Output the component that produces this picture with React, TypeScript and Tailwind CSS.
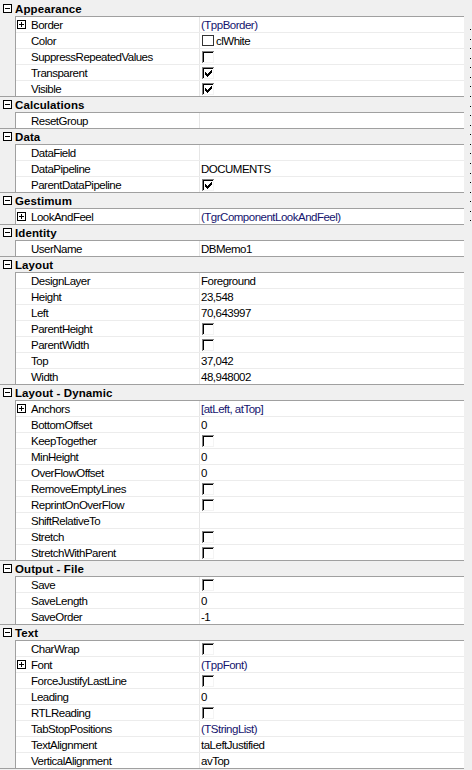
import React from "react";

type Item = {
  n: string;
  v?: string;
  plus?: boolean;
  cb?: boolean;
  color?: boolean;
  obj?: boolean;
};

type Group = { title: string; items: Item[] };

const groups: Group[] = [
  {
    title: "Appearance",
    items: [
      { n: "Border", plus: true, v: "(TppBorder)", obj: true },
      { n: "Color", color: true, v: "clWhite" },
      { n: "SuppressRepeatedValues", cb: false },
      { n: "Transparent", cb: true },
      { n: "Visible", cb: true },
    ],
  },
  { title: "Calculations", items: [{ n: "ResetGroup", v: "" }] },
  {
    title: "Data",
    items: [
      { n: "DataField", v: "" },
      { n: "DataPipeline", v: "DOCUMENTS" },
      { n: "ParentDataPipeline", cb: true },
    ],
  },
  {
    title: "Gestimum",
    items: [{ n: "LookAndFeel", plus: true, v: "(TgrComponentLookAndFeel)", obj: true }],
  },
  { title: "Identity", items: [{ n: "UserName", v: "DBMemo1" }] },
  {
    title: "Layout",
    items: [
      { n: "DesignLayer", v: "Foreground" },
      { n: "Height", v: "23,548" },
      { n: "Left", v: "70,643997" },
      { n: "ParentHeight", cb: false },
      { n: "ParentWidth", cb: false },
      { n: "Top", v: "37,042" },
      { n: "Width", v: "48,948002" },
    ],
  },
  {
    title: "Layout - Dynamic",
    items: [
      { n: "Anchors", plus: true, v: "[atLeft, atTop]", obj: true },
      { n: "BottomOffset", v: "0" },
      { n: "KeepTogether", cb: false },
      { n: "MinHeight", v: "0" },
      { n: "OverFlowOffset", v: "0" },
      { n: "RemoveEmptyLines", cb: false },
      { n: "ReprintOnOverFlow", cb: false },
      { n: "ShiftRelativeTo", v: "" },
      { n: "Stretch", cb: false },
      { n: "StretchWithParent", cb: false },
    ],
  },
  {
    title: "Output - File",
    items: [
      { n: "Save", cb: false },
      { n: "SaveLength", v: "0" },
      { n: "SaveOrder", v: "-1" },
    ],
  },
  {
    title: "Text",
    items: [
      { n: "CharWrap", cb: false },
      { n: "Font", plus: true, v: "(TppFont)", obj: true },
      { n: "ForceJustifyLastLine", cb: false },
      { n: "Leading", v: "0" },
      { n: "RTLReading", cb: false },
      { n: "TabStopPositions", v: "(TStringList)", obj: true },
      { n: "TextAlignment", v: "taLeftJustified" },
      { n: "VerticalAlignment", v: "avTop" },
    ],
  },
];

function BoxSign({ plus }: { plus: boolean }) {
  return (
    <svg width="9" height="9" viewBox="0 0 9 9" className="shrink-0 block" shapeRendering="crispEdges">
      <rect x="0.5" y="0.5" width="8" height="8" fill="#ffffff" stroke="#000000" strokeWidth="1" />
      <rect x="2" y="4" width="5" height="1" fill="#000000" />
      {plus && <rect x="4" y="2" width="1" height="5" fill="#000000" />}
    </svg>
  );
}

function CheckBox({ checked }: { checked: boolean }) {
  return (
    <svg width="12" height="12" viewBox="0 0 12 12" className="shrink-0 block" shapeRendering="crispEdges">
      <rect x="0" y="0" width="12" height="12" fill="#ffffff" />
      <rect x="0" y="0" width="12" height="1" fill="#808080" />
      <rect x="0" y="0" width="1" height="12" fill="#808080" />
      <rect x="1" y="1" width="10" height="1" fill="#000000" />
      <rect x="1" y="1" width="1" height="10" fill="#000000" />
      <rect x="1" y="11" width="11" height="1" fill="#f4f4f4" />
      <rect x="11" y="1" width="1" height="11" fill="#f4f4f4" />
      {checked && (
        <g fill="#000000">
          <rect x="3" y="5" width="1" height="3" />
          <rect x="4" y="6" width="1" height="3" />
          <rect x="5" y="7" width="1" height="3" />
          <rect x="6" y="6" width="1" height="3" />
          <rect x="7" y="5" width="1" height="3" />
          <rect x="8" y="4" width="1" height="3" />
          <rect x="9" y="3" width="1" height="3" />
        </g>
      )}
    </svg>
  );
}

function ColorSwatch() {
  return (
    <span className="block w-[12px] h-[11px] shrink-0 bg-white border border-[#333333]" />
  );
}

function Row({ item, last }: { item: Item; last: boolean }) {
  return (
    <div
      className={
        last
          ? "flex h-[15px] bg-white"
          : "flex h-[16px] bg-white border-b border-[#ececec]"
      }
    >
      <div className="w-[184px] shrink-0 flex items-center pl-px border-r border-[#e6e6e6]">
        <div className="w-[14px] shrink-0 flex items-center">
          {item.plus && <BoxSign plus={true} />}
        </div>
        <span className="whitespace-nowrap tracking-[-0.5px] pt-px">{item.n}</span>
      </div>
      <div className="flex-1 flex items-center pl-px min-w-0 overflow-hidden">
        {item.cb !== undefined ? (
          <span className="ml-px pt-px">
            <CheckBox checked={item.cb} />
          </span>
        ) : item.color ? (
          <span className="flex items-center ml-px gap-[2px]">
            <ColorSwatch />
            <span className="whitespace-nowrap tracking-[-0.5px] pt-px">{item.v}</span>
          </span>
        ) : (
          <span
            className={
              item.obj
                ? "whitespace-nowrap tracking-[-0.5px] pt-px text-[#14146e]"
                : "whitespace-nowrap tracking-[-0.5px] pt-px text-black"
            }
          >
            {item.v}
          </span>
        )}
      </div>
    </div>
  );
}

function GroupBlock({ group }: { group: Group }) {
  return (
    <div className="border-b border-[#a0a0a0]">
      <div className="h-[15px] flex items-center pl-[3px] gap-[3px]">
        <BoxSign plus={false} />
        <span className="font-bold whitespace-nowrap tracking-[0.1px] pt-px text-black">{group.title}</span>
      </div>
      <div className="ml-[15px] border-l border-t border-[#a0a0a0] bg-white">
        {group.items.map((it, i) => (
          <Row key={it.n} item={it} last={i === group.items.length - 1} />
        ))}
      </div>
    </div>
  );
}

export default function App() {
  const dots = Array.from({ length: 21 }, (_, i) => Math.round(i * 9.57));
  return (
    <div className="w-[472px] h-[770px] bg-[#f0f0f0] flex overflow-hidden font-['Liberation_Sans',Arial,sans-serif] text-[11.5px] leading-[14px] text-black">
      <div className="w-[464px] shrink-0 pt-px">
        {groups.map((g) => (
          <GroupBlock key={g.title} group={g} />
        ))}
      </div>
      <div className="w-[8px] shrink-0 pt-[29px]">
        <svg width="8" height="200" viewBox="0 0 8 200" className="block" shapeRendering="crispEdges">
          {dots.map((y) => (
            <rect key={y} x="6" y={y} width="1" height="1" fill="#000000" />
          ))}
        </svg>
      </div>
    </div>
  );
}
